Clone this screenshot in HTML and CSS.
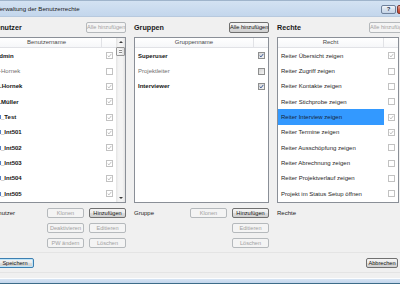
FILE: index.html
```html
<!DOCTYPE html>
<html lang="de">
<head>
<meta charset="utf-8">
<title>Verwaltung der Benutzerrechte</title>
<link rel="stylesheet" href="styles.css">
</head>
<body>
<div class="window">
  <header class="titlebar">
    <span class="title">Verwaltung der Benutzerrechte</span>
    <div class="caption-buttons">
      <span class="cap-btn help">?</span>
      <span class="cap-btn close"></span>
    </div>
  </header>
  <main class="client">
    <div class="columns">
      <section class="col">
        <div class="col-head"><h2>Benutzer</h2><button class="btn off">Alle hinzufügen</button></div>
        <div class="grid">
          <div class="grid-body">
            <div class="grid-header"><span class="hcell name">Benutzername</span><span class="hcell chk"></span></div>
            <div class="row"><span class="cell name b">Admin</span><span class="cell chk"><span class="cb dis on"><svg viewBox="0 0 5 5"><path d="M0.7 2.6 L2 3.9 L4.3 0.9"/></svg></span></span></div>
            <div class="row"><span class="cell name inactive">S-Hornek</span><span class="cell chk"><span class="cb dis"></span></span></div>
            <div class="row"><span class="cell name b">M.Hornek</span><span class="cell chk"><span class="cb dis on"><svg viewBox="0 0 5 5"><path d="M0.7 2.6 L2 3.9 L4.3 0.9"/></svg></span></span></div>
            <div class="row"><span class="cell name b">K.Müller</span><span class="cell chk"><span class="cb dis on"><svg viewBox="0 0 5 5"><path d="M0.7 2.6 L2 3.9 L4.3 0.9"/></svg></span></span></div>
            <div class="row"><span class="cell name b">UI_Test</span><span class="cell chk"><span class="cb dis on"><svg viewBox="0 0 5 5"><path d="M0.7 2.6 L2 3.9 L4.3 0.9"/></svg></span></span></div>
            <div class="row"><span class="cell name b">UI_Int501</span><span class="cell chk"><span class="cb dis on"><svg viewBox="0 0 5 5"><path d="M0.7 2.6 L2 3.9 L4.3 0.9"/></svg></span></span></div>
            <div class="row"><span class="cell name b">UI_Int502</span><span class="cell chk"><span class="cb dis on"><svg viewBox="0 0 5 5"><path d="M0.7 2.6 L2 3.9 L4.3 0.9"/></svg></span></span></div>
            <div class="row"><span class="cell name b">UI_Int503</span><span class="cell chk"><span class="cb dis on"><svg viewBox="0 0 5 5"><path d="M0.7 2.6 L2 3.9 L4.3 0.9"/></svg></span></span></div>
            <div class="row"><span class="cell name b">UI_Int504</span><span class="cell chk"><span class="cb dis on"><svg viewBox="0 0 5 5"><path d="M0.7 2.6 L2 3.9 L4.3 0.9"/></svg></span></span></div>
            <div class="row"><span class="cell name b">UI_Int505</span><span class="cell chk"><span class="cb dis on"><svg viewBox="0 0 5 5"><path d="M0.7 2.6 L2 3.9 L4.3 0.9"/></svg></span></span></div>
            <div class="row"><span class="cell name b">UI_Int506</span><span class="cell chk"><span class="cb dis on"><svg viewBox="0 0 5 5"><path d="M0.7 2.6 L2 3.9 L4.3 0.9"/></svg></span></span></div>
          </div>
          <div class="sb">
            <span class="sb-arrow up"></span>
            <span class="sb-thumb"></span>
            <span class="sb-track"></span>
            <span class="sb-arrow down"></span>
          </div>
        </div>
        <div class="actions">
          <span class="lbl">Benutzer</span>
          <button class="btn sm off">Klonen</button>
          <button class="btn sm on">Hinzufügen</button>
          <span></span>
          <button class="btn sm off">Deaktivieren</button>
          <button class="btn sm off">Editieren</button>
          <span></span>
          <button class="btn sm off">PW ändern</button>
          <button class="btn sm off">Löschen</button>
        </div>
      </section>

      <section class="col">
        <div class="col-head"><h2>Gruppen</h2><button class="btn on">Alle hinzufügen</button></div>
        <div class="grid">
          <div class="grid-body">
            <div class="grid-header"><span class="hcell name">Gruppenname</span><span class="hcell chk"></span></div>
            <div class="row"><span class="cell name b">Superuser</span><span class="cell chk"><span class="cb en on"><svg viewBox="0 0 5 5"><path d="M0.7 2.6 L2 3.9 L4.3 0.9"/></svg></span></span></div>
            <div class="row"><span class="cell name inactive">Projektleiter</span><span class="cell chk"><span class="cb en"></span></span></div>
            <div class="row"><span class="cell name b">Interviewer</span><span class="cell chk"><span class="cb en on"><svg viewBox="0 0 5 5"><path d="M0.7 2.6 L2 3.9 L4.3 0.9"/></svg></span></span></div>
          </div>
        </div>
        <div class="actions">
          <span class="lbl">Gruppe</span>
          <button class="btn sm off">Klonen</button>
          <button class="btn sm on">Hinzufügen</button>
          <span></span>
          <span></span>
          <button class="btn sm off">Editieren</button>
          <span></span>
          <span></span>
          <button class="btn sm off">Löschen</button>
        </div>
      </section>

      <section class="col col-rights">
        <div class="col-head"><h2>Rechte</h2><button class="btn off">Alle hinzufügen</button></div>
        <div class="grid">
          <div class="grid-body">
            <div class="grid-header"><span class="hcell name">Recht</span><span class="hcell chk"></span></div>
            <div class="row"><span class="cell name">Reiter Übersicht zeigen</span><span class="cell chk"><span class="cb dis on"><svg viewBox="0 0 5 5"><path d="M0.7 2.6 L2 3.9 L4.3 0.9"/></svg></span></span></div>
            <div class="row"><span class="cell name">Reiter Zugriff zeigen</span><span class="cell chk"><span class="cb dis"></span></span></div>
            <div class="row"><span class="cell name">Reiter Kontakte zeigen</span><span class="cell chk"><span class="cb dis"></span></span></div>
            <div class="row"><span class="cell name">Reiter Stichprobe zeigen</span><span class="cell chk"><span class="cb dis"></span></span></div>
            <div class="row sel"><span class="cell name">Reiter Interview zeigen</span><span class="cell chk"><span class="cb dis on"><svg viewBox="0 0 5 5"><path d="M0.7 2.6 L2 3.9 L4.3 0.9"/></svg></span></span></div>
            <div class="row"><span class="cell name">Reiter Termine zeigen</span><span class="cell chk"><span class="cb dis on"><svg viewBox="0 0 5 5"><path d="M0.7 2.6 L2 3.9 L4.3 0.9"/></svg></span></span></div>
            <div class="row"><span class="cell name">Reiter Ausschöpfung zeigen</span><span class="cell chk"><span class="cb dis"></span></span></div>
            <div class="row"><span class="cell name">Reiter Abrechnung zeigen</span><span class="cell chk"><span class="cb dis"></span></span></div>
            <div class="row"><span class="cell name">Reiter Projektverlauf zeigen</span><span class="cell chk"><span class="cb dis"></span></span></div>
            <div class="row"><span class="cell name">Projekt im Status Setup öffnen</span><span class="cell chk"><span class="cb dis"></span></span></div>
          </div>
        </div>
        <div class="actions">
          <span class="lbl">Rechte</span>
        </div>
      </section>
    </div>
    <footer class="footer">
      <button class="btn on focus save">Speichern</button>
      <button class="btn on cancel">Abbrechen</button>
    </footer>
  </main>
  <div class="frame-bottom"></div>
</div>
</body>
</html>
```

FILE: styles.css
```css
html, body {
  margin: 0;
  padding: 0;
  overflow: hidden;
  background: #f0f0f0;
}
body {
  width: 400px;
  height: 284px;
  font-family: "Liberation Sans", Arial, sans-serif;
}
.window {
  width: 420px;
  height: 284px;
  margin-left: -9px;
  display: flex;
  flex-direction: column;
  background: #f0f0f0;
}

/* title bar */
.titlebar {
  flex: none;
  height: 15px;
  display: flex;
  align-items: flex-start;
  padding-left: 5px;
  border-top: 1px solid #9fb4cb;
  border-bottom: 1px solid #b7c9de;
  background: linear-gradient(#d3e2f2, #c3d6ec);
}
.title {
  font-size: 6.1px;
  line-height: 16px;
  color: #1b1b1b;
}
.caption-buttons {
  margin-left: auto;
  margin-right: -12px;
  margin-top: 4px;
  display: flex;
  gap: 1px;
}
.cap-btn {
  box-sizing: border-box;
  height: 9px;
  border-radius: 2px;
}
.help {
  width: 15px;
  border: 1px solid #6f819b;
  background: linear-gradient(#f1f5fa, #d6e1ee 50%, #c4d3e6);
  font-size: 6px;
  line-height: 7px;
  text-align: center;
  font-weight: bold;
  color: #253448;
}
.close {
  width: 26px;
  border: 1px solid #7b3a32;
  background: linear-gradient(#e9a898, #d2644f 50%, #c2412c);
}

/* client area */
.client {
  flex: 1;
  display: flex;
  flex-direction: column;
  padding-top: 3px;
}
.columns {
  display: grid;
  grid-template-columns: 135px 135px 135px;
  column-gap: 8px;
}
.col {
  display: flex;
  flex-direction: column;
}
.col-head {
  height: 14px;
  display: flex;
  align-items: center;
  justify-content: space-between;
}
.col-rights .col-head {
  margin-right: 3px;
}
.col-rights .grid {
  margin-right: 13px;
}
h2 {
  margin: 0;
  font-size: 7.2px;
  font-weight: bold;
  color: #1a1a1a;
}

/* buttons */
.btn {
  box-sizing: border-box;
  height: 11px;
  width: 40px;
  padding: 0;
  border-radius: 2px;
  font-family: "Liberation Sans", Arial, sans-serif;
  font-size: 5.6px;
  line-height: 8px;
  white-space: nowrap;
}
.btn.sm {
  width: 37px;
  height: 10px;
}
.btn.off {
  border: 1px solid #b5b9bc;
  background: #f4f4f4;
  color: #a2a2a2;
}
.btn.on {
  border: 1px solid #707070;
  background: linear-gradient(#f4f4f4, #ebebeb 50%, #dcdcdc 50%, #d0d0d0);
  color: #151515;
}
.btn.focus {
  border-color: #3c7fb1;
  box-shadow: inset 0 0 0 1px #bfe4f7;
}
.save {
  width: 38px;
  height: 10px;
}
.cancel {
  width: 32px;
  height: 10px;
}

/* grids */
.grid {
  margin-top: 3px;
  height: 166px;
  box-sizing: border-box;
  border: 1px solid #8a8f97;
  background: #fff;
  display: flex;
  overflow: hidden;
}
.grid-body {
  flex: 1;
  min-width: 0;
  display: flex;
  flex-direction: column;
}
.grid-header {
  flex: none;
  height: 9px;
  display: flex;
  border-bottom: 1px solid #e1e2e6;
  background: linear-gradient(#ffffff, #f6f7f9);
}
.hcell {
  font-size: 6px;
  line-height: 9px;
  color: #4a4a4a;
  text-align: center;
}
.hcell.name {
  flex: 1;
  border-right: 1px solid #e1e2e6;
}
.chk {
  width: 14px;
  flex: none;
}
.row {
  flex: none;
  height: 15.35px;
  display: flex;
  align-items: stretch;
}
.cell.name {
  flex: 1;
  min-width: 0;
  padding-left: 3px;
  display: flex;
  align-items: center;
  font-size: 6px;
  white-space: nowrap;
  overflow: hidden;
  color: #262626;
}
.cell.name.b {
  font-weight: bold;
  color: #141414;
}
.cell.name.inactive {
  color: #6f6f6f;
}
.row.sel .cell.name {
  background: #3399ff;
  color: #14243a;
}
.cell.chk {
  display: flex;
  align-items: center;
  justify-content: center;
}

/* checkboxes */
.cb {
  box-sizing: border-box;
  width: 7px;
  height: 7px;
  border: 1px solid #c2c2c2;
  background: #fff;
  display: flex;
  align-items: center;
  justify-content: center;
}
.cb svg {
  width: 5px;
  height: 5px;
  fill: none;
  stroke-width: 0.9;
  stroke: #b8b8b8;
}
.cb.en {
  border-color: #8e8f8f;
  background: linear-gradient(135deg, #d4d4d4, #f4f4f4);
}
.cb.en svg {
  stroke: #2c4d8e;
}

/* scrollbar */
.sb {
  width: 9px;
  flex: none;
  display: flex;
  flex-direction: column;
  background: linear-gradient(90deg, #e4e4e4, #f4f4f4 30%, #f4f4f4 70%, #e4e4e4);
}
.sb-arrow {
  height: 8px;
  flex: none;
  display: flex;
  align-items: center;
  justify-content: center;
}
.sb-arrow::after {
  content: "";
  border-left: 2px solid transparent;
  border-right: 2px solid transparent;
}
.sb-arrow.up::after {
  border-bottom: 2px solid #3a3a3a;
}
.sb-arrow.down::after {
  border-top: 2px solid #3a3a3a;
}
.sb-thumb {
  flex: none;
  box-sizing: border-box;
  height: 9px;
  margin: 1px 0 0;
  border: 1px solid #979797;
  border-radius: 1px;
  background:
    repeating-linear-gradient(#f8f8f8 0 1px, #8c8c8c 1px 2px) center / 3px 5px no-repeat,
    linear-gradient(90deg, #f5f5f5, #e0e0e0);
}
.sb-track {
  flex: 1;
}

/* action rows */
.actions {
  margin-top: 5px;
  display: grid;
  grid-template-columns: 1fr 37px 37px;
  grid-auto-rows: 10px;
  column-gap: 5px;
  row-gap: 5px;
  height: 40px;
}
.lbl {
  align-self: center;
  font-size: 6px;
  color: #1c1c1c;
}

/* footer */
.footer {
  margin-top: 4px;
  padding: 5px 13px 4px 5px;
  display: flex;
  justify-content: space-between;
  border-top: 1px solid #e4e4e4;
  border-bottom: 1px solid #e4e4e4;
}

.frame-bottom {
  flex: none;
  height: 6px;
  background: linear-gradient(#fcfdfe 0 1px, #d6e4f3 1px, #c3d6ec 5px, #3d6c89 5px);
}
```
